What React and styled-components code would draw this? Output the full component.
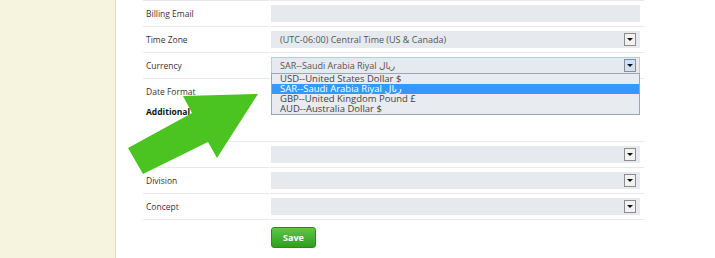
import React from 'react'
import styled, { createGlobalStyle } from 'styled-components'

const GlobalStyle = createGlobalStyle`
    html, body {
        margin: 0;
        padding: 0;
        background: #fff;
    }
    body {
        font-family: "Open Sans", "DejaVu Sans", sans-serif;
    }
`

const Page = styled.div`
    position: relative;
    display: flex;
    width: 715px;
    height: 258px;
    overflow: hidden;
    background: #fff;
`

const Sidebar = styled.div`
    width: 115px;
    flex-shrink: 0;
    background: #f6f4de;
    border-right: 1px solid #dcdbc6;
`

const Main = styled.div`
    padding-left: 27px;
`

const Row = styled.div`
    display: grid;
    grid-template-columns: 126px 374px;
    column-gap: 1px;
    height: ${p => p.h ?? 26}px;
`

const Cell = styled.div`
    display: flex;
    align-items: center;
    border-bottom: ${p => (p.noLine ? '1px solid transparent' : '1px solid #e8e8e8')};
`

const Label = styled(Cell)`
    padding-left: 3px;
    font-size: 8.5px;
    color: #3a3238;
`

const Value = styled(Cell)`
    padding-left: 1px;
`

const Heading = styled.div`
    height: 37px;
    border-bottom: 1px solid #e8e8e8;
    padding: 1px 0 0 3px;
    box-sizing: border-box;
    font-size: 8.5px;
    line-height: 12px;
    font-weight: 700;
    color: #111;
`

const Input = styled.div`
    width: 369px;
    height: 17px;
    background: #e6e9ee;
`

const Select = styled.div`
    position: relative;
    display: flex;
    align-items: center;
    box-sizing: border-box;
    width: 369px;
    height: 17px;
    padding: 0 3px 0 8px;
    background: #e6e9ee;
    border: 1px solid ${p => (p.focused ? '#f0c47c' : '#e6e9ee')};
    font-size: 9px;
    color: #555;
`

const SelectText = styled.span`
    flex: 1;
    white-space: nowrap;
`

const DropButton = styled.span`
    display: flex;
    align-items: center;
    justify-content: center;
    box-sizing: border-box;
    width: 12px;
    height: 13px;
    border: 1px solid #8d8d8d;
    background: ${p => (p.focused ? '#cfe2f3' : '#f2f2f2')};

    &::after {
        content: '';
        border-left: 3px solid transparent;
        border-right: 3px solid transparent;
        border-top: 3px solid #111;
    }
`

const OptionList = styled.div`
    position: absolute;
    top: 100%;
    left: -1px;
    right: -1px;
    z-index: 2;
    border: 1px solid #9aa6b8;
    background: #e8ebf0;
`

const Option = styled.div`
    height: 10px;
    line-height: 10px;
    padding-left: 8px;
    font-size: 9.5px;
    white-space: nowrap;
    color: ${p => (p.active ? '#fff' : '#444')};
    background: ${p => (p.active ? '#3399ff' : 'transparent')};
`

const ButtonRow = styled.div`
    padding: 4px 0 0 128px;
`

const SaveButton = styled.button`
    width: 45px;
    height: 21px;
    padding: 0;
    border: 1px solid #2b8a1c;
    border-radius: 3px;
    background: linear-gradient(#5cc945, #2e9e1d);
    color: #fff;
    font-family: "Open Sans", "DejaVu Sans", sans-serif;
    font-size: 9px;
    font-weight: 700;
`

const Arrow = styled.svg`
    position: absolute;
    left: 0;
    top: 0;
    pointer-events: none;
    z-index: 3;
`

const currencies = [
    'USD--United States Dollar $',
    'SAR--Saudi Arabia Riyal ريال',
    'GBP--United Kingdom Pound £',
    'AUD--Australia Dollar $',
]

const FieldRow = ({ label, noLine, children }) => (
    <Row>
        <Label noLine={noLine}>{label}</Label>
        <Value noLine={noLine}>{children}</Value>
    </Row>
)

const DropDown = ({ text, focused, children }) => (
    <Select focused={focused}>
        <SelectText>{text}</SelectText>
        <DropButton focused={focused} />
        {children}
    </Select>
)

export default function App() {
    return (
        <>
            <GlobalStyle />
            <Page>
                <Sidebar />
                <Main>
                    <Row h={1}>
                        <Cell />
                        <Cell />
                    </Row>
                    <FieldRow label="Billing Email">
                        <Input />
                    </FieldRow>
                    <FieldRow label="Time Zone">
                        <DropDown text="(UTC-06:00) Central Time (US & Canada)" />
                    </FieldRow>
                    <FieldRow label="Currency">
                        <DropDown text="SAR--Saudi Arabia Riyal ريال" focused>
                            <OptionList>
                                {currencies.map((c, i) => (
                                    <Option key={c} active={i === 1}>{c}</Option>
                                ))}
                            </OptionList>
                        </DropDown>
                    </FieldRow>
                    <FieldRow label="Date Format" noLine>
                        <DropDown text="" />
                    </FieldRow>
                    <Heading>Additional Information</Heading>
                    <FieldRow label="Brand">
                        <DropDown text="" />
                    </FieldRow>
                    <FieldRow label="Division">
                        <DropDown text="" />
                    </FieldRow>
                    <FieldRow label="Concept">
                        <DropDown text="" />
                    </FieldRow>
                    <ButtonRow>
                        <SaveButton>Save</SaveButton>
                    </ButtonRow>
                </Main>
                <Arrow width="715" height="258" viewBox="0 0 715 258">
                    <polygon
                        points="128,148 192,113 183,96 258,94 217,158 208,142 143,174"
                        fill="#4bc421"
                    />
                </Arrow>
            </Page>
        </>
    )
}
